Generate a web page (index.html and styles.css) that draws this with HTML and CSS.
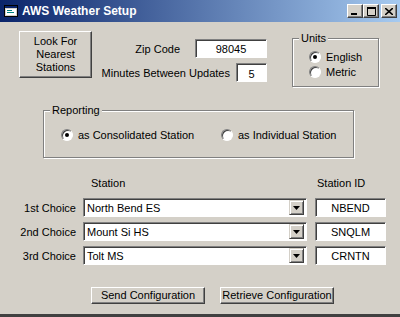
FILE: index.html
```html
<!DOCTYPE html>
<html lang="en">

<head>
    <meta charset="UTF-8">
    <title>AWS Weather Setup</title>
    <link rel="stylesheet" href="styles.css">
</head>

<body>
    <div class="window">
        <div class="titlebar">
            <svg class="app-icon" width="14" height="14" viewBox="0 0 14 14">
                <rect x="0.5" y="1.5" width="13" height="11" fill="#d4d0c8" stroke="#000" />
                <rect x="1" y="2" width="12" height="2" fill="#0a246a" />
                <rect x="2" y="5" width="10" height="6" fill="#fff" />
                <rect x="3" y="6" width="5" height="1" fill="#008080" />
                <rect x="3" y="8" width="7" height="1" fill="#008080" />
            </svg>
            <span class="title">AWS Weather Setup</span>
            <div class="caption-buttons">
                <span class="cap-btn">
                    <svg width="8" height="7" viewBox="0 0 8 7"><rect x="0" y="5" width="6" height="2" fill="#000" /></svg>
                </span>
                <span class="cap-btn">
                    <svg width="9" height="9" viewBox="0 0 9 9"><path d="M0.5 0.5h8v8h-8z M0 1.5h9" fill="none" stroke="#000" /><rect x="0" y="0" width="9" height="2" fill="#000" /></svg>
                </span>
                <span class="cap-btn close">
                    <svg width="8" height="7" viewBox="0 0 8 7"><path d="M0 0l8 7M8 0L0 7" stroke="#000" stroke-width="1.6" /></svg>
                </span>
            </div>
        </div>

        <div class="client">
            <div class="top">
                <button class="btn look">Look For<br>Nearest<br>Stations</button>

                <div class="fields">
                    <div class="field-row">
                        <span class="label zip-label">Zip Code</span>
                        <span class="field zip">98045</span>
                    </div>
                    <div class="field-row">
                        <span class="label minutes-label">Minutes Between Updates</span>
                        <span class="field minutes">5</span>
                    </div>
                </div>

                <div class="group units">
                    <span class="legend">Units</span>
                    <div class="radio-row"><span class="radio checked"></span>English</div>
                    <div class="radio-row"><span class="radio"></span>Metric</div>
                </div>
            </div>

            <div class="group reporting">
                <span class="legend">Reporting</span>
                <div class="reporting-options">
                    <div class="radio-row consolidated"><span class="radio checked"></span>as Consolidated Station</div>
                    <div class="radio-row"><span class="radio"></span>as Individual Station</div>
                </div>
            </div>

            <div class="stations">
                <span></span>
                <span class="col-head station-head">Station</span>
                <span class="col-head id-head">Station ID</span>

                <span class="choice">1st Choice</span>
                <div class="combo"><span class="combo-text">North Bend ES</span><span class="drop"><svg width="7" height="4" viewBox="0 0 7 4"><path d="M0 0h7L3.5 4z" fill="#000" /></svg></span></div>
                <span class="field station-id">NBEND</span>

                <span class="choice">2nd Choice</span>
                <div class="combo"><span class="combo-text">Mount Si HS</span><span class="drop"><svg width="7" height="4" viewBox="0 0 7 4"><path d="M0 0h7L3.5 4z" fill="#000" /></svg></span></div>
                <span class="field station-id">SNQLM</span>

                <span class="choice">3rd Choice</span>
                <div class="combo"><span class="combo-text">Tolt MS</span><span class="drop"><svg width="7" height="4" viewBox="0 0 7 4"><path d="M0 0h7L3.5 4z" fill="#000" /></svg></span></div>
                <span class="field station-id">CRNTN</span>
            </div>

            <div class="actions">
                <button class="btn action">Send Configuration</button>
                <button class="btn action">Retrieve Configuration</button>
            </div>
        </div>
    </div>
</body>

</html>
```

FILE: styles.css
```css
:root {
    --face: #d4d0c8;
    --shadow: #808080;
    --dark: #404040;
    --light: #ffffff;
}

* {
    margin: 0;
    padding: 0;
    box-sizing: border-box;
}

body {
    background-color: var(--face);
    font-family: 'Liberation Sans', Arial, sans-serif;
    font-size: 11px;
    color: #000;
    white-space: nowrap;
}

.window {
    width: 400px;
    height: 317px;
    display: flex;
    flex-direction: column;
    background-color: var(--face);
    border-bottom: 3px solid #404040;
}

/* title bar */

.titlebar {
    height: 22px;
    display: flex;
    align-items: center;
    padding-left: 4px;
    background: linear-gradient(to right, #0a246a, #a6caf0);
}

.app-icon {
    flex: none;
}

.title {
    margin-left: 4px;
    color: #fff;
    font-weight: bold;
    font-size: 12px;
}

.caption-buttons {
    margin-left: auto;
    margin-right: 3px;
    display: flex;
}

.cap-btn {
    width: 16px;
    height: 14px;
    display: flex;
    align-items: center;
    justify-content: center;
    background-color: var(--face);
    border: 1px solid;
    border-color: var(--light) var(--dark) var(--dark) var(--light);
    box-shadow: inset -1px -1px var(--shadow);
}

.cap-btn.close {
    margin-left: 2px;
}

/* client area */

.client {
    flex: 1;
    display: flex;
    flex-direction: column;
}

.btn {
    font-family: inherit;
    font-size: 11px;
    color: #000;
    background-color: var(--face);
    border: 1px solid;
    border-color: var(--light) var(--dark) var(--dark) var(--light);
    box-shadow: inset -1px -1px var(--shadow);
}

.field {
    display: flex;
    align-items: center;
    justify-content: center;
    height: 19px;
    background-color: #fff;
    border: 1px solid;
    border-color: var(--shadow) var(--light) var(--light) var(--shadow);
    box-shadow: inset 1px 1px var(--dark);
}

.top {
    display: flex;
    align-items: flex-start;
    margin-top: 9px;
}

.look {
    margin-left: 19px;
    width: 73px;
    height: 47px;
    line-height: 13px;
}

.fields {
    width: 175px;
    margin-top: 8px;
    display: flex;
    flex-direction: column;
    gap: 5px;
}

.field-row {
    display: flex;
    align-items: center;
    justify-content: flex-end;
}

.zip-label {
    margin-right: 15px;
}

.minutes-label {
    margin-right: 6px;
}

.zip {
    width: 72px;
}

.minutes {
    width: 31px;
    padding-top: 2px;
}

/* group boxes */

.group {
    position: relative;
    border: 1px solid var(--shadow);
    box-shadow: inset 1px 1px var(--light), 1px 1px var(--light);
}

.legend {
    position: absolute;
    top: -7px;
    left: 6px;
    padding: 0 2px;
    line-height: 13px;
    background-color: var(--face);
}

.units {
    margin-left: 25px;
    margin-top: 7px;
    width: 87px;
    height: 49px;
    padding: 10px 0 0 16px;
}

.radio-row {
    display: flex;
    align-items: center;
    height: 15px;
}

.radio {
    position: relative;
    flex: none;
    width: 12px;
    height: 12px;
    margin-right: 5px;
    border-radius: 50%;
    background-color: #fff;
    border: 1px solid;
    border-color: var(--shadow) var(--light) var(--light) var(--shadow);
    box-shadow: inset 1px 1px var(--dark);
}

.radio.checked::after {
    content: '';
    position: absolute;
    left: 3px;
    top: 3px;
    width: 4px;
    height: 4px;
    border-radius: 50%;
    background-color: #000;
}

.reporting {
    margin-top: 23px;
    margin-left: 43px;
    width: 311px;
    height: 48px;
    padding: 16px 0 0 17px;
}

.reporting-options {
    display: flex;
}

.consolidated {
    width: 160px;
}

/* station table */

.stations {
    display: grid;
    grid-template-columns: 76px 224px 72px;
    column-gap: 7px;
    row-gap: 5px;
    margin-top: 19px;
    align-items: center;
}

.col-head {
    height: 16px;
    line-height: 13px;
}

.station-head {
    padding-left: 8px;
}

.id-head {
    padding-left: 2px;
    margin-left: 1px;
}

.choice {
    text-align: right;
}

.combo {
    display: flex;
    align-items: center;
    height: 19px;
    padding: 2px 2px 2px 3px;
    background-color: #fff;
    border: 1px solid;
    border-color: var(--shadow) var(--light) var(--light) var(--shadow);
    box-shadow: inset 1px 1px var(--dark);
}

.combo-text {
    flex: 1;
}

.drop {
    width: 15px;
    height: 15px;
    display: flex;
    align-items: center;
    justify-content: center;
    background-color: var(--face);
    border: 1px solid;
    border-color: var(--face) var(--dark) var(--dark) var(--face);
    box-shadow: inset 1px 1px var(--light), inset -1px -1px var(--shadow);
}

.station-id {
    margin-left: 1px;
}

/* bottom buttons */

.actions {
    display: flex;
    gap: 15px;
    margin-top: auto;
    margin-bottom: 10px;
    padding-left: 91px;
}

.action {
    width: 114px;
    height: 17px;
    line-height: 13px;
}
```
